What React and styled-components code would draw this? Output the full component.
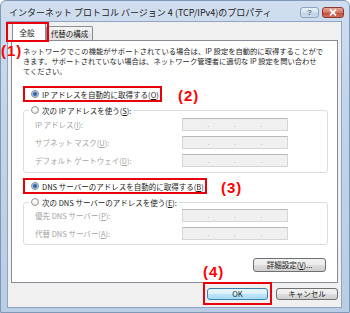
import React from 'react';
import styled, { createGlobalStyle, css } from 'styled-components';

const GlobalStyle = createGlobalStyle`
  html, body {
    margin: 0;
    padding: 0;
    background: #ffffff;
  }
  body {
    font-family: "Noto Sans CJK JP", "Liberation Sans", sans-serif;
  }
  * {
    box-sizing: border-box;
  }
`;

const Window = styled.div`
  position: relative;
  width: 350px;
  height: 313px;
  display: flex;
  flex-direction: column;
  padding: 0 7px 4px 6px;
  border: 1px solid #7f98b8;
  border-radius: 6px 6px 0 0;
  background: linear-gradient(180deg, #d0deef 0%, #c2d4e9 35%, #b9cde4 100%);
`;

const TitleBar = styled.div`
  height: 20px;
  display: flex;
  align-items: center;
  justify-content: space-between;
  padding-top: 2px;
`;

const Title = styled.div`
  margin-left: 2px;
  font-size: 9px;
  color: #1c1c1c;
  white-space: nowrap;
`;

const Caption = styled.div`
  display: flex;
  gap: 3px;
  margin-right: -2px;
`;

const CaptionButton = styled.div`
  width: ${p => (p.$close ? 22 : 19)}px;
  height: 11px;
  border-radius: 3px;
  display: flex;
  align-items: center;
  justify-content: center;
  font-family: "Liberation Sans", sans-serif;
  font-size: 8px;
  font-weight: 700;
  color: #5b7393;
  border: 1px solid #8ea3bf;
  background: linear-gradient(180deg, #e9f0f8 0%, #d3e0ee 50%, #bfd1e6 51%, #cddcec 100%);
  ${p =>
    p.$close &&
    css`
      border-color: #8b3a30;
      background: linear-gradient(180deg, #e8a89d 0%, #d57362 50%, #c24532 51%, #d2735f 100%);
    `}
`;

const Client = styled.div`
  flex: 1;
  display: flex;
  flex-direction: column;
  padding: 0 3px;
  background: #f0f0f0;
  border: 1px solid #8fa5c1;
`;

const TabStrip = styled.div`
  height: 19px;
  display: flex;
  align-items: flex-end;
  padding-left: 1px;
  margin-bottom: -1px;
`;

const Tab = styled.div`
  position: relative;
  height: ${p => (p.$active ? 18 : 14)}px;
  width: ${p => p.$width}px;
  margin-bottom: ${p => (p.$active ? 0 : 1)}px;
  display: flex;
  align-items: center;
  justify-content: center;
  font-size: 7.5px;
  color: #1a1a1a;
  border: 1px solid #898c95;
  border-bottom: none;
  border-radius: 2px 2px 0 0;
  background: ${p => (p.$active ? '#ffffff' : 'linear-gradient(180deg, #f5f5f5 0%, #ebebeb 50%, #dedede 51%, #e6e6e6 100%)')};
  z-index: ${p => (p.$active ? 2 : 1)};
  padding-right: ${p => (p.$active ? 4 : 0)}px;

  ${p =>
    p.$marked &&
    css`
      &::after {
        content: '';
        position: absolute;
        top: -2px;
        bottom: -1px;
        left: -7px;
        right: -4px;
        border: 2px solid #e8000b;
      }
    `}
`;

const Panel = styled.div`
  height: 243px;
  display: flex;
  flex-direction: column;
  align-items: flex-start;
  padding: 0 9px 0 11px;
  background: #ffffff;
  border: 1px solid #898c95;
`;

const Description = styled.p`
  margin: 5px 0 0;
  font-size: 7.3px;
  line-height: 10px;
  color: #1e1e1e;
  white-space: nowrap;
`;

const RadioRow = styled.label`
  position: relative;
  height: 12px;
  margin-top: ${p => p.$top}px;
  display: flex;
  align-items: center;
  gap: 3px;
  padding: 0 3px 0 8px;
  font-size: 7.5px;
  color: #1a1a1a;
  white-space: nowrap;

  ${p =>
    p.$marked &&
    css`
      &::after {
        content: '';
        position: absolute;
        top: -2px;
        bottom: -2px;
        left: 0;
        right: 0;
        border: 2px solid #e8000b;
      }
    `}
`;

const Radio = styled.span`
  flex: none;
  width: 8px;
  height: 8px;
  border-radius: 50%;
  border: 1px solid #939393;
  background: radial-gradient(circle at 40% 35%, #ffffff 0%, #e2e2e2 100%);
  ${p =>
    p.$checked &&
    css`
      border-color: #7f8c99;
      background: radial-gradient(circle, #1f4f8f 0, #3d78c0 1.6px, #a9c4e2 2.6px, #f2f5f8 3.2px);
    `}
`;

const GroupBox = styled.div`
  align-self: stretch;
  margin-top: ${p => p.$top}px;
  padding-bottom: ${p => p.$bottom}px;
  display: flex;
  flex-direction: column;
  border: 1px solid #d9dde2;
  border-radius: 3px;
`;

const Legend = styled(RadioRow)`
  align-self: flex-start;
  margin-top: -7px;
  margin-left: 5px;
  padding: 0 2px;
  background: #ffffff;
`;

const Fields = styled.div`
  margin-top: ${p => p.$top}px;
  display: flex;
  flex-direction: column;
  gap: 5px;
`;

const FieldRow = styled.div`
  display: grid;
  grid-template-columns: 1fr 106px;
  align-items: center;
  padding: 0 39px 0 11px;
  font-size: 7.5px;
  color: #a3a3a3;
  white-space: nowrap;
`;

const IpBox = styled.div`
  height: 13px;
  display: flex;
  align-items: center;
  justify-content: space-evenly;
  background: #f0f0f0;
  border: 1px solid #d6d6d6;
  border-top-color: #b9b9b9;
  font-family: "Liberation Sans", sans-serif;
  font-size: 7px;
  color: #9a9a9a;
`;

const ButtonRow = styled.div`
  align-self: stretch;
  display: flex;
  justify-content: flex-end;
  gap: 8px;
  margin-top: ${p => p.$top}px;
  padding-right: ${p => p.$right}px;
`;

const Button = styled.button`
  position: relative;
  width: ${p => p.$width}px;
  height: ${p => p.$height}px;
  padding: 0;
  font-family: inherit;
  font-size: 7.5px;
  line-height: 1;
  color: #1a1a1a;
  border: 1px solid #707070;
  border-radius: 3px;
  background: linear-gradient(180deg, #f2f2f2 0%, #ebebeb 50%, #dddddd 51%, #cfcfcf 100%);

  ${p =>
    p.$default &&
    css`
      border-color: #3c7fb1;
      background: linear-gradient(180deg, #eaf6fd 0%, #d9f0fc 50%, #bee6fd 51%, #a7d9f5 100%);
    `}

  ${p =>
    p.$marked &&
    css`
      &::after {
        content: '';
        position: absolute;
        top: -7px;
        bottom: -6px;
        left: -5px;
        right: -5px;
        border: 2px solid #e8000b;
      }
    `}
`;

const Marker = styled.span`
  position: absolute;
  left: ${p => p.$x}px;
  top: ${p => p.$y}px;
  font-family: "Liberation Sans", sans-serif;
  font-size: 15px;
  font-weight: 700;
  line-height: 1;
  letter-spacing: 1px;
  color: #ff0000;
  z-index: 5;
`;

const IpAddress = () => (
  <IpBox>
    <span>.</span>
    <span>.</span>
    <span>.</span>
  </IpBox>
);

const Field = ({ label }) => (
  <FieldRow>
    <span>{label}</span>
    <IpAddress />
  </FieldRow>
);

const CloseGlyph = () => (
  <svg width="8" height="7" viewBox="0 0 8 7">
    <path d="M1 0.5 L7 6.5 M7 0.5 L1 6.5" stroke="#ffffff" strokeWidth="1.8" />
  </svg>
);

export default function App() {
  return (
    <>
      <GlobalStyle />
      <Window>
        <TitleBar>
          <Title>インターネット プロトコル バージョン 4 (TCP/IPv4)のプロパティ</Title>
          <Caption>
            <CaptionButton>?</CaptionButton>
            <CaptionButton $close>
              <CloseGlyph />
            </CaptionButton>
          </Caption>
        </TitleBar>

        <Client>
          <TabStrip>
            <Tab $active $marked $width={34}>全般</Tab>
            <Tab $width={47}>代替の構成</Tab>
          </TabStrip>

          <Panel>
            <Description>
              ネットワークでこの機能がサポートされている場合は、IP 設定を自動的に取得することがで
              <br />
              きます。サポートされていない場合は、ネットワーク管理者に適切な IP 設定を問い合わせ
              <br />
              てください。
            </Description>

            <RadioRow $top={12} $marked>
              <Radio $checked />
              <span>IP アドレスを自動的に取得する(<u>O</u>)</span>
            </RadioRow>

            <GroupBox $top={10} $bottom={5}>
              <Legend>
                <Radio />
                <span>次の IP アドレスを使う(<u>S</u>):</span>
              </Legend>
              <Fields $top={2}>
                <Field label={<>IP アドレス(<u>I</u>):</>} />
                <Field label={<>サブネット マスク(<u>U</u>):</>} />
                <Field label={<>デフォルト ゲートウェイ(<u>D</u>):</>} />
              </Fields>
            </GroupBox>

            <RadioRow $top={7} $marked>
              <Radio $checked />
              <span>DNS サーバーのアドレスを自動的に取得する(<u>B</u>)</span>
            </RadioRow>

            <GroupBox $top={10} $bottom={4}>
              <Legend>
                <Radio />
                <span>次の DNS サーバーのアドレスを使う(<u>E</u>):</span>
              </Legend>
              <Fields $top={1}>
                <Field label={<>優先 DNS サーバー(<u>P</u>):</>} />
                <Field label={<>代替 DNS サーバー(<u>A</u>):</>} />
              </Fields>
            </GroupBox>

            <ButtonRow $top={13} $right={2}>
              <Button $width={73} $height={14}>詳細設定(<u>V</u>)...</Button>
            </ButtonRow>
          </Panel>

          <ButtonRow $top={5} $right={0}>
            <Button $width={61} $height={12} $default $marked>OK</Button>
            <Button $width={62} $height={12}>キャンセル</Button>
          </ButtonRow>
        </Client>

        <Marker $x={0} $y={42}>(1)</Marker>
        <Marker $x={177} $y={87}>(2)</Marker>
        <Marker $x={220} $y={179}>(3)</Marker>
        <Marker $x={202} $y={263}>(4)</Marker>
      </Window>
    </>
  );
}
